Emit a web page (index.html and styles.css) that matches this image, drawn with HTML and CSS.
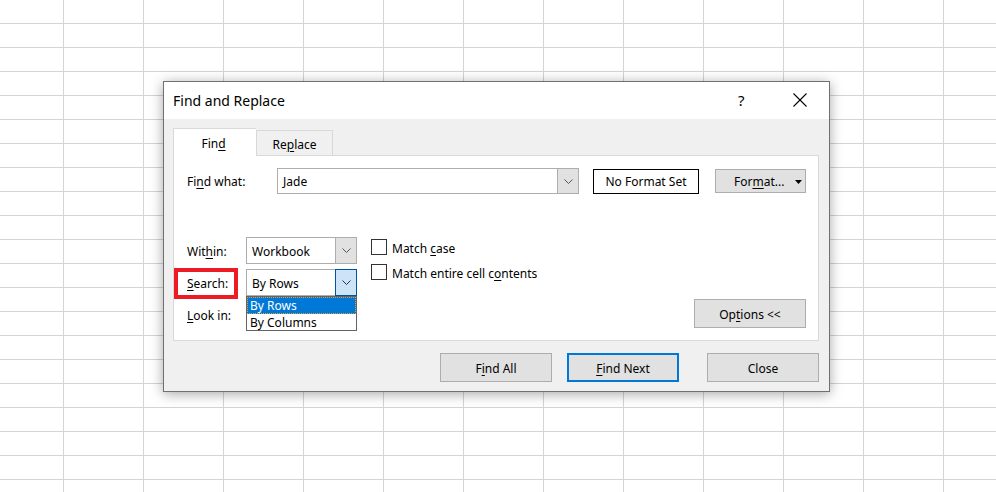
FILE: index.html
```html
<!DOCTYPE html>
<html>
<head>
<meta charset="utf-8">
<title>Find and Replace</title>
<link rel="stylesheet" href="styles.css">
</head>
<body>
<div class="sheet">
  <div class="dialog">
    <div class="titlebar">
      <span class="title">Find and Replace</span>
      <span class="help">?</span>
      <span class="close"><svg width="14" height="14" viewBox="0 0 14 14"><path d="M0.5 0.5 L13.5 13.5 M13.5 0.5 L0.5 13.5" stroke="#000" stroke-width="1.1" fill="none"/></svg></span>
    </div>
    <div class="body">
      <div class="tabs">
        <div class="tab active">Fin<u>d</u></div>
        <div class="tab">Re<u>p</u>lace</div>
      </div>
      <div class="panel">
        <div class="row1">
          <span class="lbl-what">Fi<u>n</u>d what:</span>
          <div class="combo wide">
            <span class="val">Jade</span>
            <span class="arrow"><svg width="9" height="5" viewBox="0 0 9 5"><path d="M0.5 0.5 L4.5 4.5 L8.5 0.5" stroke="#555" stroke-width="1" fill="none"/></svg></span>
          </div>
          <div class="noformat">No Format Set</div>
          <div class="btn fmt"><span>For<u>m</u>at...</span><svg class="tri" width="7" height="4" viewBox="0 0 7 4"><path d="M0 0 H7 L3.5 4 Z" fill="#000"/></svg></div>
        </div>
        <div class="lower">
          <div class="fields">
            <div class="frow">
              <span class="flbl">Wit<u>h</u>in:</span>
              <div class="combo sm">
                <span class="val">Workbook</span>
                <span class="arrow"><svg width="9" height="5" viewBox="0 0 9 5"><path d="M0.5 0.5 L4.5 4.5 L8.5 0.5" stroke="#555" stroke-width="1" fill="none"/></svg></span>
              </div>
            </div>
            <div class="frow search">
              <span class="flbl"><u>S</u>earch:</span>
              <div class="combo sm focused">
                <span class="val">By Rows</span>
                <span class="arrow"><svg width="9" height="5" viewBox="0 0 9 5"><path d="M0.5 0.5 L4.5 4.5 L8.5 0.5" stroke="#333" stroke-width="1" fill="none"/></svg></span>
              </div>
              <div class="list">
                <div class="item sel">By Rows</div>
                <div class="item">By Columns</div>
              </div>
              <div class="mark"></div>
            </div>
            <div class="frow">
              <span class="flbl"><u>L</u>ook in:</span>
            </div>
          </div>
          <div class="checks">
            <div class="chk"><span class="box"></span><span class="ctext">Match <u>c</u>ase</span></div>
            <div class="chk"><span class="box"></span><span class="ctext">Match entire cell c<u>o</u>ntents</span></div>
          </div>
          <div class="opts">
            <div class="btn opt">Op<u>t</u>ions &lt;&lt;</div>
          </div>
        </div>
      </div>
      <div class="actions">
        <div class="btn act">F<u>i</u>nd All</div>
        <div class="btn act primary"><u>F</u>ind Next</div>
        <div class="btn act close-btn">Close</div>
      </div>
    </div>
  </div>
</div>
</body>
</html>
```

FILE: styles.css
```css
* { box-sizing: border-box; }
html, body { margin: 0; padding: 0; }
body {
  width: 996px;
  height: 492px;
  overflow: hidden;
  font-family: "Noto Sans", "DejaVu Sans", sans-serif;
  font-size: 12px;
  color: #000;
}
.sheet {
  position: relative;
  width: 996px;
  height: 492px;
  background-color: #fff;
  background-image:
    linear-gradient(to right, transparent 63px, #d4d4d4 63px, #d4d4d4 64px, transparent 64px),
    linear-gradient(to bottom, transparent 23px, #d4d4d4 23px, #d4d4d4 24px, transparent 24px);
  background-size: 80px 100%, 100% 24px;
}
u { text-decoration-thickness: 1px; text-underline-offset: 2px; }

.dialog {
  position: absolute;
  left: 163px;
  top: 81px;
  width: 667px;
  height: 311px;
  border: 1px solid #707070;
  background: #f0f0f0;
  box-shadow: 0 2px 12px rgba(0,0,0,0.35);
  display: flex;
  flex-direction: column;
}
.titlebar {
  height: 37px;
  background: #fff;
  display: flex;
  align-items: center;
  padding-left: 9px;
}
.title { font-size: 14px; flex: 1; padding-bottom: 1px; }
.help { font-size: 15px; width: 20px; margin-right: 35px; text-align: left; padding-bottom: 1px; }
.close { width: 36px; display: flex; align-items: center; padding-bottom: 1px; }

.body {
  flex: 1;
  padding: 9px 10px 9px 9px;
  display: flex;
  flex-direction: column;
}
.tabs {
  display: flex;
  align-items: flex-end;
  height: 27px;
}
.tab {
  height: 25px;
  width: 77px;
  border: 1px solid #d9d9d9;
  border-bottom: none;
  display: flex;
  align-items: center;
  justify-content: center;
  background: #f0f0f0;
  padding-top: 2px;
}
.tab.active {
  height: 28px;
  width: 83px;
  background: #fff;
  border-right: none;
  margin-bottom: -1px;
  position: relative;
  z-index: 1;
  padding-top: 1px;
  padding-right: 3px;
}
.panel {
  width: 646px;
  height: 186px;
  background: #fff;
  border: 1px solid #d9d9d9;
  padding: 12px 12px 12px 13px;
}
.row1 {
  display: flex;
  align-items: center;
  height: 26px;
}
.lbl-what { width: 90px; }
.combo {
  height: 26px;
  border: 1px solid #adadad;
  background: #fff;
  display: flex;
  align-items: stretch;
}
.combo .val { flex: 1; display: flex; align-items: center; padding-left: 5px; }
.combo.sm .val { padding-top: 1px; }
.combo .arrow {
  width: 21px;
  background: #e1e1e1;
  border-left: 1px solid #adadad;
  display: flex;
  align-items: center;
  justify-content: center;
}
.combo.wide { width: 302px; }
.noformat {
  margin-left: 14px;
  width: 106px;
  height: 25px;
  border: 1px solid #000;
  display: flex;
  align-items: center;
  justify-content: center;
}
.btn {
  background: #e1e1e1;
  border: 1px solid #adadad;
  display: flex;
  align-items: center;
  justify-content: center;
}
.fmt {
  margin-left: auto;
  width: 91px;
  height: 24px;
  justify-content: flex-start;
  padding-left: 18px;
}
.fmt .tri { margin-left: 11px; margin-top: 1px; }

.lower {
  margin-top: 43px;
  height: 91px;
  display: flex;
}
.fields {
  display: flex;
  flex-direction: column;
  gap: 5px;
}
.frow {
  display: flex;
  align-items: center;
  height: 27px;
  position: relative;
}
.flbl { width: 59px; padding-top: 1px; }
.combo.sm { width: 111px; height: 27px; }
.combo.focused .arrow {
  background: #cce4f7;
  border: 1px solid #005499;
  margin: -1px -1px -1px 0;
  width: 22px;
}
.list {
  position: absolute;
  left: 59px;
  top: 27px;
  width: 111px;
  height: 35px;
  border: 1px solid #646464;
  background: #fff;
  z-index: 2;
}
.item {
  height: 17px;
  line-height: 18px;
  padding-left: 3px;
}
.item.sel {
  background: #0078d7;
  color: #fff;
  outline: 1px dotted #f0a030;
  outline-offset: -1px;
}
.mark {
  position: absolute;
  left: -13px;
  top: -1px;
  width: 64px;
  height: 31px;
  border: 4px solid #ed1c24;
}

.checks {
  margin-left: 14px;
  padding-top: 2px;
  display: flex;
  flex-direction: column;
  gap: 9px;
}
.chk {
  display: flex;
  align-items: center;
  height: 16px;
}
.chk .ctext { padding-top: 2px; }
.chk .box {
  width: 16px;
  height: 16px;
  border: 1px solid #333;
  background: #fff;
  margin-right: 5px;
}
.opts {
  margin-left: auto;
  display: flex;
  align-items: flex-end;
}
.opt { width: 112px; height: 29px; padding-top: 1px; }

.actions {
  margin-top: 12px;
  display: flex;
  justify-content: flex-end;
}
.act { width: 112px; height: 29px; padding-top: 1px; }
.primary { border: 2px solid #0078d7; margin-left: 15px; }
.close-btn { margin-left: 28px; }
```
